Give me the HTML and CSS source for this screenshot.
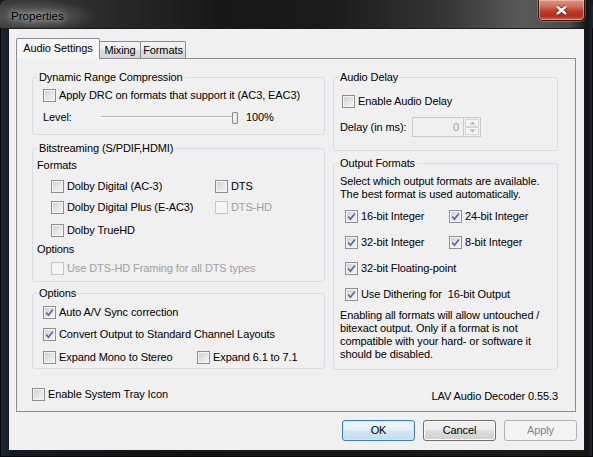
FILE: index.html
```html
<!DOCTYPE html>
<html>
<head>
<meta charset="utf-8">
<title>Properties</title>
<link rel="stylesheet" href="styles.css">
</head>
<body>
<div class="window">
  <div class="titlebar">
    <span class="title">Properties</span>
    <div class="close">
      <svg width="45" height="19" viewBox="0 0 45 19">
        <path d="M18 5.5 L27 13 M27 5.5 L18 13" stroke="#4a1208" stroke-opacity="0.55" stroke-width="4.4" fill="none"/>
        <path d="M18 5.5 L27 13 M27 5.5 L18 13" stroke="#ffffff" stroke-width="2.4" fill="none"/>
      </svg>
    </div>
  </div>
  <div class="client">
    <div class="tabs">
      <div class="tab active">Audio Settings</div>
      <div class="tab t-mixing">Mixing</div>
      <div class="tab t-formats">Formats</div>
    </div>
    <div class="panel">
      <div class="col">
        <fieldset class="group">
          <legend>Dynamic Range Compression</legend>
          <div class="gbody drc-body">
            <div class="row h21"><span class="cb"></span><span class="lbl">Apply DRC on formats that support it (AC3, EAC3)</span></div>
            <div class="row h22">
              <span class="level-lbl">Level:</span>
              <div class="slider"><span class="thumb"></span></div>
              <span class="pct">100%</span>
            </div>
          </div>
        </fieldset>
        <fieldset class="group g-bits">
          <legend>Bitstreaming (S/PDIF,HDMI)</legend>
          <div class="gbody bits-body">
            <div class="row h21">Formats</div>
            <div class="grid2 bits-grid">
              <div class="row h20"><span class="cb"></span><span class="lbl">Dolby Digital (AC-3)</span></div>
              <div class="row h20"><span class="cb"></span><span class="lbl">DTS</span></div>
              <div class="row h23"><span class="cb"></span><span class="lbl">Dolby Digital Plus (E-AC3)</span></div>
              <div class="row h23"><span class="cb dis"></span><span class="lbl dis-t">DTS-HD</span></div>
              <div class="row h23"><span class="cb"></span><span class="lbl">Dolby TrueHD</span></div>
              <div class="row h23"></div>
            </div>
            <div class="row h15">Options</div>
            <div class="row h22 indent"><span class="cb dis"></span><span class="lbl dis-t">Use DTS-HD Framing for all DTS types</span></div>
          </div>
        </fieldset>
        <fieldset class="group g-opts">
          <legend>Options</legend>
          <div class="gbody opts-body">
            <div class="row h22"><span class="cb"><svg width="11" height="11" viewBox="0 0 11 11"><path class="tick" d="M2.2 5.6 L4.4 8.2 L8.9 2.4"/></svg></span><span class="lbl">Auto A/V Sync correction</span></div>
            <div class="row h23"><span class="cb"><svg width="11" height="11" viewBox="0 0 11 11"><path class="tick" d="M2.2 5.6 L4.4 8.2 L8.9 2.4"/></svg></span><span class="lbl">Convert Output to Standard Channel Layouts</span></div>
            <div class="grid2 opts-grid">
              <div class="row h22"><span class="cb"></span><span class="lbl">Expand Mono to Stereo</span></div>
              <div class="row h22"><span class="cb"></span><span class="lbl">Expand 6.1 to 7.1</span></div>
            </div>
          </div>
        </fieldset>
      </div>
      <div class="col">
        <fieldset class="group">
          <legend>Audio Delay</legend>
          <div class="gbody delay-body">
            <div class="row h21"><span class="cb"></span><span class="lbl">Enable Audio Delay</span></div>
            <div class="row h20 delay-row">
              <span class="delay-lbl">Delay (in ms):</span>
              <div class="spin">
                <div class="spin-edit">0</div>
                <div class="spin-btns">
                  <div class="spin-btn"><svg width="7" height="4" viewBox="0 0 7 4"><path d="M0.5 3.5 L3.5 0.5 L6.5 3.5 Z" fill="#b8b8b8"/></svg></div>
                  <div class="spin-btn"><svg width="7" height="4" viewBox="0 0 7 4"><path d="M0.5 0.5 L3.5 3.5 L6.5 0.5 Z" fill="#b8b8b8"/></svg></div>
                </div>
              </div>
            </div>
          </div>
        </fieldset>
        <fieldset class="group g-out">
          <legend>Output Formats</legend>
          <div class="gbody out-body">
            <p class="txt">Select which output formats are available.<br>The best format is used automatically.</p>
            <div class="grid2 out-grid">
              <div class="row h26"><span class="cb"><svg width="11" height="11" viewBox="0 0 11 11"><path class="tick" d="M2.2 5.6 L4.4 8.2 L8.9 2.4"/></svg></span><span class="lbl">16-bit Integer</span></div>
              <div class="row h26"><span class="cb"><svg width="11" height="11" viewBox="0 0 11 11"><path class="tick" d="M2.2 5.6 L4.4 8.2 L8.9 2.4"/></svg></span><span class="lbl">24-bit Integer</span></div>
              <div class="row h26"><span class="cb"><svg width="11" height="11" viewBox="0 0 11 11"><path class="tick" d="M2.2 5.6 L4.4 8.2 L8.9 2.4"/></svg></span><span class="lbl">32-bit Integer</span></div>
              <div class="row h26"><span class="cb"><svg width="11" height="11" viewBox="0 0 11 11"><path class="tick" d="M2.2 5.6 L4.4 8.2 L8.9 2.4"/></svg></span><span class="lbl">8-bit Integer</span></div>
            </div>
            <div class="row h26 out-ind"><span class="cb"><svg width="11" height="11" viewBox="0 0 11 11"><path class="tick" d="M2.2 5.6 L4.4 8.2 L8.9 2.4"/></svg></span><span class="lbl">32-bit Floating-point</span></div>
            <div class="row h27 out-ind"><span class="cb"><svg width="11" height="11" viewBox="0 0 11 11"><path class="tick" d="M2.2 5.6 L4.4 8.2 L8.9 2.4"/></svg></span><span class="lbl">Use Dithering for&nbsp; 16-bit Output</span></div>
            <p class="txt txt2">Enabling all formats will allow untouched /<br>bitexact output. Only if a format is not<br>compatible with your hard- or software it<br>should be disabled.</p>
          </div>
        </fieldset>
      </div>
      <div class="row h22 tray-row"><span class="cb"></span><span class="lbl">Enable System Tray Icon</span></div>
      <div class="version">LAV Audio Decoder 0.55.3</div>
    </div>
    <div class="buttons">
      <div class="btn btn-default">OK</div>
      <div class="btn">Cancel</div>
      <div class="btn btn-dis">Apply</div>
    </div>
  </div>
</div>
</body>
</html>
```

FILE: styles.css
```css
html, body {
  margin: 0;
  padding: 0;
  background: #101820;
}

body {
  font-family: "Liberation Sans", Arial, sans-serif;
  font-size: 11px;
  letter-spacing: -0.1px;
  color: #000;
}

.window {
  width: 593px;
  height: 457px;
  box-sizing: border-box;
  display: flex;
  flex-direction: column;
  border-radius: 6px 6px 0 0;
  overflow: hidden;
  background:
    linear-gradient(90deg, #1a2838 0%, #141c26 2%, #121417 20%, #161616 60%, #1c1c1c 90%, #141414 99%, #1d2a38 100%);
  box-shadow: inset 0 0 0 1px #080808;
}

.titlebar {
  height: 28px;
  flex: none;
  display: flex;
  justify-content: space-between;
  align-items: flex-start;
  padding: 0 8px 0 11px;
  background:
    radial-gradient(ellipse 60px 16px at 38px 16px, rgba(150,150,150,0.55), rgba(150,150,150,0) 100%),
    linear-gradient(90deg, #3a3a3a 0%, #2c2c2c 15%, #171717 38%, #1a1a1a 55%, #353535 75%, #5a5a5a 88%, #4a4a4a 96%, #141414 99%, #1a2430 100%);
}

.title {
  margin-top: 9px;
  font-size: 11.6px;
  line-height: 14px;
  letter-spacing: 0;
  color: #000;
  text-shadow: 0 0 6px rgba(255,255,255,0.7), 0 0 10px rgba(255,255,255,0.4);
}

.close {
  width: 47px;
  height: 21px;
  box-sizing: border-box;
  border: 1px solid rgba(30, 10, 10, 0.9);
  border-top: none;
  border-radius: 0 0 5px 5px;
  background: linear-gradient(180deg, #d9988b 0%, #cd6a58 35%, #bc3e2a 55%, #b32e1d 80%, #d0604a 100%);
  box-shadow: inset 0 0 0 1px rgba(255, 210, 200, 0.5), 0 0 0 1px rgba(255,255,255,0.2);
  display: flex;
  align-items: center;
  justify-content: center;
}

.client {
  flex: 1;
  margin: 0 8px 6px 8px;
  border: 1px solid #1b1b1b;
  background: #f0f0f0;
  padding: 9px 7px 9px 7px;
  display: flex;
  flex-direction: column;
}

/* Tabs */
.tabs {
  height: 20px;
  flex: none;
  display: flex;
  align-items: flex-end;
}

.tab {
  box-sizing: border-box;
  height: 17px;
  border: 1px solid #898c95;
  border-bottom: none;
  border-radius: 2px 2px 0 0;
  background: linear-gradient(180deg, #f4f4f4 0%, #ececec 50%, #dedede 51%, #d6d6d6 100%);
  display: flex;
  align-items: center;
  justify-content: center;
  line-height: 13px;
  margin-left: -1px;
}

.tab.active {
  height: 21px;
  width: 84px;
  margin-left: 0;
  margin-bottom: -1px;
  padding-bottom: 2px;
  background: #f7f7f7;
  position: relative;
  z-index: 1;
}

.t-mixing { width: 42px; }
.t-formats { width: 46px; }

/* Panel */
.panel {
  flex: 1;
  box-sizing: border-box;
  margin-right: 1px;
  border: 1px solid #898c95;
  background: #f0f0f0;
  display: grid;
  grid-template-columns: 293px 225px;
  column-gap: 8px;
  align-content: start;
  padding: 12px 17px 0 15px;
}

.col {
  display: flex;
  flex-direction: column;
}

fieldset.group {
  margin: 0;
  padding: 0;
  min-width: 0;
  border: 1px solid #d5dfe5;
  border-radius: 3px;
}

fieldset.group legend {
  margin-left: 4px;
  padding: 0 2px;
  line-height: 13px;
}

.g-bits { margin-top: 7px !important; }
.g-opts { margin-top: 5px !important; }
.g-out { margin-top: 6px !important; }

.row {
  display: flex;
  align-items: center;
  line-height: 13px;
  white-space: nowrap;
}

.h15 { height: 15px; }
.h20 { height: 20px; }
.h21 { height: 21px; }
.h22 { height: 22px; }
.h23 { height: 23px; }
.h26 { height: 26px; }
.h27 { height: 27px; }

.lbl { margin-left: 3px; }

.cb {
  width: 13px;
  height: 13px;
  box-sizing: border-box;
  flex: none;
  border: 1px solid #8e8f8f;
  background: linear-gradient(135deg, #c9cdd2 0%, #e2e3e5 45%, #f5f5f5 100%);
  box-shadow: inset 0 0 0 1px #f4f4f4;
  display: flex;
  align-items: center;
  justify-content: center;
}

.cb.dis {
  border-color: #c6c6c6;
  background: #f4f4f4;
  box-shadow: none;
}

.dis-t { color: #a0a0a0; }

.tick {
  fill: none;
  stroke: #5566a3;
  stroke-width: 1.6;
  stroke-linejoin: miter;
}

.grid2 {
  display: grid;
}

/* DRC */
.drc-body { padding: 1px 0 6px 10px; }

.level-lbl { width: 58px; flex: none; }

.slider {
  width: 137px;
  height: 22px;
  flex: none;
  display: flex;
  align-items: center;
  justify-content: flex-end;
  background:
    linear-gradient(#b3b3b3, #b3b3b3) 0 10px / 100% 1px no-repeat,
    linear-gradient(#fdfdfd, #fdfdfd) 0 11px / 100% 1px no-repeat;
}

.thumb {
  width: 6px;
  height: 12px;
  box-sizing: border-box;
  border: 1px solid #8a8a8a;
  border-radius: 1px;
  background: linear-gradient(90deg, #fafafa, #e4e4e4);
  margin-top: 1px;
}

.pct { margin-left: 8px; }

/* Bitstreaming */
.bits-body { padding: 0 0 2px 4px; }
.bits-grid { grid-template-columns: 164px auto; padding-left: 14px; }
.indent { padding-left: 14px; }

/* Options */
.opts-body { padding: 1px 0 0 10px; }
.opts-grid { grid-template-columns: 154px auto; }

/* Audio delay */
.delay-body { padding: 7px 0 13px 8px; }
.delay-row { margin-top: 5px; margin-left: -2px; }
.delay-lbl { width: 72px; flex: none; }

.spin {
  display: flex;
  height: 20px;
}

.spin-edit {
  width: 51px;
  height: 20px;
  box-sizing: border-box;
  border: 1px solid #c8cbce;
  border-right: none;
  background: #f0f0f0;
  color: #a0a0a0;
  text-align: right;
  padding-right: 4px;
  line-height: 18px;
}

.spin-btns {
  width: 18px;
  height: 20px;
  box-sizing: border-box;
  border: 1px solid #c8cbce;
  background: #f0f0f0;
  display: flex;
  flex-direction: column;
  padding: 1px;
}

.spin-btn {
  flex: 1;
  box-sizing: border-box;
  border: 1px solid #d6d6d6;
  border-radius: 1px;
  background: #f4f4f4;
  display: flex;
  align-items: center;
  justify-content: center;
}

/* Output formats */
.out-body { padding: 5px 0 8px 6px; }

.txt {
  margin: 0;
  line-height: 13px;
  white-space: nowrap;
}

.out-grid {
  grid-template-columns: 104px auto;
  padding-left: 5px;
  margin-top: 2px;
}

.out-ind { padding-left: 5px; }
.txt2 { margin-top: 1px; }

/* Footer */
.tray-row { margin-top: 13px; }

.version {
  margin-top: 20px;
  line-height: 13px;
  text-align: right;
  white-space: nowrap;
}

/* Buttons */
.buttons {
  flex: none;
  display: flex;
  justify-content: flex-end;
  gap: 8px;
  margin-top: 8px;
}

.btn {
  width: 73px;
  height: 21px;
  box-sizing: border-box;
  border: 1px solid #707070;
  border-radius: 3px;
  background: linear-gradient(180deg, #f2f2f2 0%, #ebebeb 48%, #dddddd 52%, #cfcfcf 100%);
  box-shadow: inset 0 0 0 1px #fbfbfb;
  display: flex;
  align-items: center;
  justify-content: center;
  line-height: 13px;
}

.btn-default {
  border-color: #3c7fb1;
  background: linear-gradient(180deg, #eef6fb 0%, #e3eff7 48%, #d4e6f2 52%, #c6dcec 100%);
  box-shadow: inset 0 0 0 1px #cfe8f8;
}

.btn-dis {
  border-color: #adb2b5;
  background: #f4f4f4;
  box-shadow: none;
  color: #838383;
}
```
